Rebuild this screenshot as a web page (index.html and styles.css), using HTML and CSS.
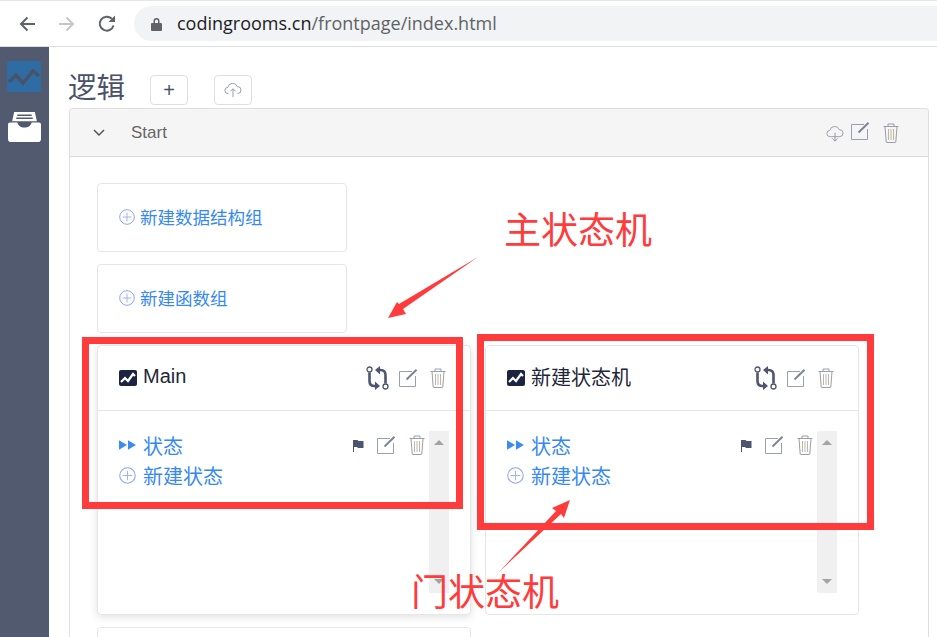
FILE: index.html
```html
<!DOCTYPE html>
<html lang="zh">
<head>
    <meta charset="UTF-8">
    <title>逻辑</title>
    <link rel="stylesheet" href="styles.css">
</head>
<body>
    <!-- icon sprite -->
    <svg class="sprite" width="0" height="0">
        <symbol id="i-trend" viewBox="0 0 18 18">
            <rect x="0" y="1" width="18" height="16" rx="2" fill="#1c2440"/>
            <path d="M2 13l4-4 3 3 5-7 2 2" fill="none" stroke="#fff" stroke-width="2.200"/>
        </symbol>
        <symbol id="i-cloud-up" viewBox="0 0 20 18">
            <path d="M5 13H4.500a3.500 3.500 0 0 1-.3-7A5.500 5.500 0 0 1 14.800 5.200 3.900 3.900 0 0 1 15.500 13H15" fill="none" stroke="#8b92a3" stroke-width="1"/>
            <path d="M10 17V8M7 10.500L10 7.500l3 3" fill="none" stroke="#8b92a3" stroke-width="1"/>
        </symbol>
        <symbol id="i-cloud-down" viewBox="0 0 20 18">
            <path d="M5 12H4.500a3.500 3.500 0 0 1-.3-7A5.500 5.500 0 0 1 14.800 4.200 3.900 3.900 0 0 1 15.500 12H5" fill="none" stroke="#9097a6" stroke-width="1"/>
            <path d="M10 7.500V17M7 14l3 3 3-3" fill="none" stroke="#9c87a6" stroke-width="1"/>
        </symbol>
        <symbol id="i-edit" viewBox="0 0 20 18">
            <path d="M13 2.500H.500v15h16V7" fill="none" stroke="#98a0b0" stroke-width="1"/>
            <path d="M7.500 10.500L17.500 .800" fill="none" stroke="#7d8596" stroke-width="2"/>
        </symbol>
        <symbol id="i-trash" viewBox="0 0 16 20">
            <path d="M.500 3.500h15M5 3.500V1h6v2.500M2 3.500l1.200 15.500q.1.500.8.500h8q.7 0 .8-.5L14 3.500" fill="none" stroke="#999ea8" stroke-width="1"/>
            <path d="M5.500 6v11M8 6v11M10.500 6v11" stroke="#c2b5a2" stroke-width="1"/>
        </symbol>
        <symbol id="i-compare" viewBox="0 0 23 24">
            <circle cx="3.500" cy="3.500" r="2.500" fill="#fff" stroke="#4d566e" stroke-width="1.300"/>
            <circle cx="19.500" cy="20.500" r="2.500" fill="#fff" stroke="#4d566e" stroke-width="1.300"/>
            <path d="M3.500 6.500V15c0 3 1.500 5 5 5h1M19.500 17.500V9c0-3-1.500-5-5-5h-1" fill="none" stroke="#4d566e" stroke-width="2.600"/>
            <path d="M9 15.500l5 4.500-5 4zM14 0l-5 4 5 4.500z" fill="#4d566e"/>
        </symbol>
        <symbol id="i-flag" viewBox="0 0 12 13">
            <path d="M1 1h4.500l1 1H11.500v7H6L5 8H2v5H1z" fill="#4d566e"/>
        </symbol>
        <symbol id="i-play" viewBox="0 0 18 10">
            <path d="M0 0l8.500 5L0 10zM9.500 0L18 5l-8.500 5z" fill="#3c8cf0"/>
        </symbol>
        <symbol id="i-plus" viewBox="0 0 16 16">
            <circle cx="8" cy="8" r="7.300" fill="none" stroke="#8fa6ee" stroke-width="1"/>
            <path d="M8 3.500v9M3.500 8h9" stroke="#a4b4f0" stroke-width="1"/>
        </symbol>
    </svg>

    <div class="browser-bar">
        <svg class="nav-icon" viewBox="0 0 18 18"><path d="M17 9H3M9.500 2.500L3 9l6.500 6.500" fill="none" stroke="#5f6368" stroke-width="2"/></svg>
        <svg class="nav-icon" viewBox="0 0 18 18"><path d="M1 9h14M8.500 2.500L15 9l-6.500 6.500" fill="none" stroke="#c4c6c9" stroke-width="2"/></svg>
        <svg class="nav-icon" viewBox="0 0 18 18"><path d="M15.500 10.500A7 7 0 1 1 13.800 3.800" fill="none" stroke="#5f6368" stroke-width="2"/><path d="M10.500 7H17V.500z" fill="#5f6368"/></svg>
        <div class="address">
            <svg class="lock" viewBox="0 0 11 14"><path d="M2.500 6V4a3 3 0 0 1 6 0v2h1.500a1 1 0 0 1 1 1v6a1 1 0 0 1-1 1H1a1 1 0 0 1-1-1V7a1 1 0 0 1 1-1zM4 6h3V4a1.500 1.500 0 0 0-3 0z" fill="#5f6368"/></svg>
            <span class="host">codingrooms.cn</span><span class="path">/frontpage/index.html</span>
        </div>
    </div>

    <div class="page">
        <div class="sidebar">
            <svg class="side-icon" viewBox="0 0 34 32"><rect width="34" height="31" rx="2" fill="#2d6da3"/><path d="M2 21l7-7 7 8 10-12 6 5" fill="none" stroke="#4a5168" stroke-width="3.500"/></svg>
            <svg class="side-icon side-inbox" viewBox="0 0 32 30"><path d="M6 1h20l2 9H4z" fill="#fff"/><path d="M9 4h14M8 7h16" stroke="#525a70" stroke-width="1.500"/><path d="M2 11h7c1 3 3 5 7 5s6-2 7-5h7a2 2 0 0 1 2 2v14a3 3 0 0 1-3 3H3a3 3 0 0 1-3-3V13a2 2 0 0 1 2-2z" fill="#fff"/></svg>
        </div>

        <div class="content">
            <div class="title-row">
                <h1>逻辑</h1>
                <button class="btn btn-add">+</button>
                <button class="btn btn-upload"><svg class="ico-cloud"><use href="#i-cloud-up"/></svg></button>
            </div>

            <div class="panel">
                <div class="panel-head">
                    <svg class="chevron" viewBox="0 0 12 8"><path d="M1 1l5 5 5-5" fill="none" stroke="#555" stroke-width="1.500"/></svg>
                    <span class="panel-title">Start</span>
                    <div class="panel-tools">
                        <svg class="ico-cloud"><use href="#i-cloud-down"/></svg>
                        <svg class="ico-edit"><use href="#i-edit"/></svg>
                        <svg class="ico-trash"><use href="#i-trash"/></svg>
                    </div>
                </div>
                <div class="panel-body">
                    <div class="add-card"><a class="link"><svg class="ico-plus"><use href="#i-plus"/></svg>新建数据结构组</a></div>
                    <div class="add-card"><a class="link"><svg class="ico-plus"><use href="#i-plus"/></svg>新建函数组</a></div>

                    <div class="machines">
                        <div class="machine raised">
                            <div class="machine-head">
                                <svg class="ico-trend"><use href="#i-trend"/></svg>
                                <span class="machine-name">Main</span>
                                <svg class="ico-compare"><use href="#i-compare"/></svg>
                                <svg class="ico-edit"><use href="#i-edit"/></svg>
                                <svg class="ico-trash"><use href="#i-trash"/></svg>
                            </div>
                            <div class="machine-body">
                                <div class="states">
                                    <div class="state">
                                        <a class="link"><svg class="ico-play"><use href="#i-play"/></svg>状态</a>
                                        <div class="state-tools">
                                            <svg class="ico-flag"><use href="#i-flag"/></svg>
                                            <svg class="ico-edit"><use href="#i-edit"/></svg>
                                            <svg class="ico-trash"><use href="#i-trash"/></svg>
                                        </div>
                                    </div>
                                    <a class="link new-state"><svg class="ico-plus-big"><use href="#i-plus"/></svg>新建状态</a>
                                </div>
                                <div class="scrollbar"><span class="arrow-up"></span><span class="arrow-down"></span></div>
                            </div>
                        </div>

                        <div class="machine">
                            <div class="machine-head">
                                <svg class="ico-trend"><use href="#i-trend"/></svg>
                                <span class="machine-name">新建状态机</span>
                                <svg class="ico-compare"><use href="#i-compare"/></svg>
                                <svg class="ico-edit"><use href="#i-edit"/></svg>
                                <svg class="ico-trash"><use href="#i-trash"/></svg>
                            </div>
                            <div class="machine-body">
                                <div class="states">
                                    <div class="state">
                                        <a class="link"><svg class="ico-play"><use href="#i-play"/></svg>状态</a>
                                        <div class="state-tools">
                                            <svg class="ico-flag"><use href="#i-flag"/></svg>
                                            <svg class="ico-edit"><use href="#i-edit"/></svg>
                                            <svg class="ico-trash"><use href="#i-trash"/></svg>
                                        </div>
                                    </div>
                                    <a class="link new-state"><svg class="ico-plus-big"><use href="#i-plus"/></svg>新建状态</a>
                                </div>
                                <div class="scrollbar"><span class="arrow-up"></span><span class="arrow-down"></span></div>
                            </div>
                        </div>

                        <div class="machine machine-next"></div>
                    </div>
                </div>
            </div>
        </div>
    </div>

    <!-- red annotations drawn over the screenshot -->
    <div class="mark mark-main"></div>
    <div class="mark mark-door"></div>
    <div class="note note-main">主状态机</div>
    <div class="note note-door">门状态机</div>
    <svg class="arrows" viewBox="0 0 937 637">
        <path d="M478 257L399 304 397 302 388 318 406 314 403 309z" fill="#ff3b3b"/>
        <path d="M499 572L556 511 552 508 570 500 564 518 561 514z" fill="#ff3b3b"/>
    </svg>
</body>
</html>
```

FILE: styles.css
```css
body {
    margin: 0;
    width: 937px;
    height: 637px;
    overflow: hidden;
    position: relative;
    background: #fff;
    color: #4a5168;
    font-family: 'Liberation Sans', 'Noto Sans CJK SC', sans-serif;
}
.sprite {
    position: absolute;
}
svg {
    display: block;
    flex: none;
}

/* browser chrome */
.browser-bar {
    height: 47px;
    box-sizing: border-box;
    padding: 5px 0 5px 18px;
    display: flex;
    align-items: center;
    border-bottom: 1px solid #dcdddf;
    border-top: 1px solid #e4e6ea;
}
.nav-icon {
    width: 18px;
    height: 18px;
    margin-right: 22px;
}
.address {
    flex: 1;
    height: 35px;
    margin-left: -4px;
    padding-left: 17px;
    display: flex;
    align-items: center;
    background: #f1f3f4;
    border-radius: 18px 0 0 18px;
    font-family: 'Open Sans', sans-serif;
    font-size: 18px;
}
.address span {
    margin-top: -2px;
}
.lock {
    width: 11px;
    height: 14px;
    margin-right: 15px;
}
.host {
    color: #202124;
}
.path {
    color: #5f6368;
}

/* page */
.page {
    display: flex;
    height: 590px;
    overflow: hidden;
}
.sidebar {
    width: 49px;
    background: #525a70;
    padding: 14px 0 0 7px;
    box-sizing: border-box;
}
.side-icon {
    width: 34px;
    height: 32px;
}
.side-inbox {
    width: 33px;
    height: 31px;
    margin: 18px 0 0 1px;
}
.content {
    flex: 1;
    padding: 0 8px 0 20px;
    min-width: 0;
}
.title-row {
    height: 61px;
    display: flex;
    align-items: flex-start;
}
h1 {
    margin: 23px 0 0 -1px;
    font-size: 28.500px;
    line-height: 36px;
    font-weight: 400;
    width: 82px;
    color: #4a5168;
}
.btn {
    width: 38px;
    height: 30px;
    margin-top: 28px;
    padding: 0;
    background: #fff;
    border: 1px solid #dcdfe6;
    border-radius: 4px;
    color: #4a5168;
    font-size: 20px;
    font-family: inherit;
    display: flex;
    align-items: center;
    justify-content: center;
}
.btn-add {
    margin-right: 26px;
}
.ico-cloud {
    width: 18px;
    height: 16px;
}

/* collapse panel */
.panel {
    border: 1px solid #dedede;
    border-radius: 4px 4px 0 0;
    border-bottom: 0;
    height: 530px;
}
.panel-head {
    height: 47px;
    display: flex;
    align-items: center;
    padding: 0 29px 0 23px;
    background: #f5f5f5;
    border-bottom: 1px solid #dedede;
    border-radius: 4px 4px 0 0;
}
.chevron {
    width: 12px;
    height: 8px;
    margin-right: 26px;
}
.panel-title {
    flex: 1;
    font-size: 17px;
    color: #666;
}
.panel-tools {
    display: flex;
    align-items: center;
}
.panel-tools .ico-cloud {
    margin-top: 2px;
}
.panel-tools .ico-edit {
    margin: -3px 12px 0 7px;
}
.ico-edit {
    width: 20px;
    height: 18px;
}
.ico-trash {
    width: 16px;
    height: 20px;
}
.panel-body {
    padding: 26px 0 0 27px;
}

.add-card {
    width: 250px;
    height: 69px;
    box-sizing: border-box;
    margin-bottom: 12px;
    padding: 0 21px;
    display: flex;
    align-items: center;
    background: #fff;
    border: 1px solid #e6e6e6;
    border-radius: 4px;
}
.add-card .link {
    padding-bottom: 2px;
}
.link {
    display: flex;
    align-items: center;
    color: #3688f2;
    font-size: 17.500px;
}
.ico-plus {
    width: 16px;
    height: 16px;
    margin-right: 5px;
}

/* state machine cards */
.machines {
    display: flex;
    flex-wrap: wrap;
    column-gap: 14px;
    row-gap: 12px;
}
.machine {
    width: 374px;
    height: 270px;
    box-sizing: border-box;
    background: #fff;
    border: 1px solid #e6e6e6;
    border-radius: 4px;
}
.raised {
    box-shadow: 0 2px 8px rgba(0, 0, 0, 0.12);
}
.machine-next {
    height: 60px;
}
.machine-head {
    height: 65px;
    box-sizing: border-box;
    padding: 0 24px 0 21px;
    display: flex;
    align-items: center;
    border-bottom: 1px solid #e6e6e6;
}
.ico-trend {
    width: 18px;
    height: 18px;
    margin-right: 6px;
}
.machine-name {
    flex: 1;
    font-size: 20px;
    color: #1f2639;
    padding-bottom: 4px;
}
.ico-compare {
    width: 23px;
    height: 24px;
    margin-right: 10px;
}
.machine-head .ico-edit {
    margin-right: 11px;
}
.machine-body {
    height: 204px;
    box-sizing: border-box;
    padding: 20px 21px 22px 21px;
    display: flex;
}
.states {
    flex: 1;
    padding-right: 4px;
    margin-top: -1px;
}
.state {
    height: 30px;
    display: flex;
    align-items: center;
    justify-content: space-between;
}
.states .link {
    font-size: 20px;
}
.ico-play {
    width: 17px;
    height: 10px;
    margin-right: 7px;
}
.ico-plus-big {
    width: 17px;
    height: 17px;
    margin-right: 7px;
}
.new-state {
    height: 30px;
}
.state-tools {
    display: flex;
    align-items: center;
}
.ico-flag {
    width: 12px;
    height: 13px;
    margin-right: 13px;
}
.state-tools .ico-edit {
    margin-right: 12px;
}
.scrollbar {
    width: 20px;
    background: #f0f0f0;
    display: flex;
    flex-direction: column;
    justify-content: space-between;
    align-items: center;
    padding: 9px 0;
    box-sizing: border-box;
}
.arrow-up {
    border: 5px solid transparent;
    border-top: 0;
    border-bottom: 5px solid #a3a3a3;
}
.arrow-down {
    border: 5px solid transparent;
    border-bottom: 0;
    border-top: 5px solid #a3a3a3;
}

/* annotations */
.mark {
    position: absolute;
    box-sizing: border-box;
    border: 7px solid #ff3b3b;
}
.mark-main {
    left: 82px;
    top: 337px;
    width: 381px;
    height: 172px;
}
.mark-door {
    left: 477px;
    top: 334px;
    width: 397px;
    height: 196px;
}
.note {
    position: absolute;
    color: #ff3b3b;
    font-size: 37px;
    line-height: 44px;
    white-space: nowrap;
}
.note-main {
    left: 504px;
    top: 210px;
}
.note-door {
    left: 411px;
    top: 572px;
}
.arrows {
    position: absolute;
    left: 0;
    top: 0;
    width: 937px;
    height: 637px;
}
```
